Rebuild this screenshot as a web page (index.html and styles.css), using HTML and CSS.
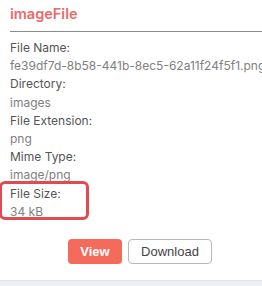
FILE: index.html
```html
<!DOCTYPE html>
<html>
<head>
<meta charset="utf-8">
<link rel="stylesheet" href="styles.css">
</head>
<body>
<div class="card">
  <div class="title">imageFile</div>
  <div class="rule"></div>
  <div class="fields">
    <div class="label">File Name:</div>
    <div class="value">fe39df7d-8b58-441b-8ec5-62a11f24f5f1.png</div>
    <div class="label">Directory:</div>
    <div class="value">images</div>
    <div class="label">File Extension:</div>
    <div class="value">png</div>
    <div class="label">Mime Type:</div>
    <div class="value">image/png</div>
    <div class="highlight">
      <div class="label">File Size:</div>
      <div class="value">34 kB</div>
    </div>
  </div>
  <div class="actions">
    <button class="btn btn-primary">View</button>
    <button class="btn btn-outline">Download</button>
  </div>
</div>
<div class="footer"></div>
</body>
</html>
```
FILE: styles.css
```css
html, body {
  margin: 0;
  padding: 0;
  background: #ffffff;
  overflow: hidden;
}
body {
  width: 262px;
  height: 286px;
  font-family: Inter, "Noto Sans", sans-serif;
}
.card {
  height: 280px;
  padding-left: 10px;
  box-sizing: border-box;
  white-space: nowrap;
  overflow: hidden;
}
.title {
  padding-top: 3px;
  font-size: 14.5px;
  line-height: 22px;
  font-weight: 600;
  color: #e96a6a;
}
.rule {
  margin-top: 6px;
  height: 0;
  border-top: 1px solid #8d8d8d;
  margin-right: -10px;
}
.fields {
  margin-top: 7px;
  font-size: 12px;
  line-height: 18.2px;
}
.label {
  color: #555555;
}
.value {
  color: #808080;
}
.highlight {
  position: relative;
}
.highlight::before {
  content: "";
  position: absolute;
  left: -11px;
  top: -4px;
  width: 84px;
  height: 33px;
  border: 3px solid #df4b50;
  border-radius: 6px;
}
.actions {
  margin-top: 18px;
  padding-left: 58px;
  display: flex;
  gap: 6px;
}
.btn {
  font-family: "Liberation Sans", Arial, sans-serif;
  font-size: 13px;
  height: 25px;
  border-radius: 4px;
  padding: 0;
  box-sizing: border-box;
}
.btn-primary {
  width: 54px;
  background: #f46b5c;
  border: none;
  color: #ffffff;
  font-weight: 700;
}
.btn-outline {
  width: 84px;
  background: #ffffff;
  border: 1px solid #b8b8b8;
  color: #444444;
}
.footer {
  height: 6px;
  background: #eceff4;
  border-top: 1px solid #e2e5ea;
}
```
